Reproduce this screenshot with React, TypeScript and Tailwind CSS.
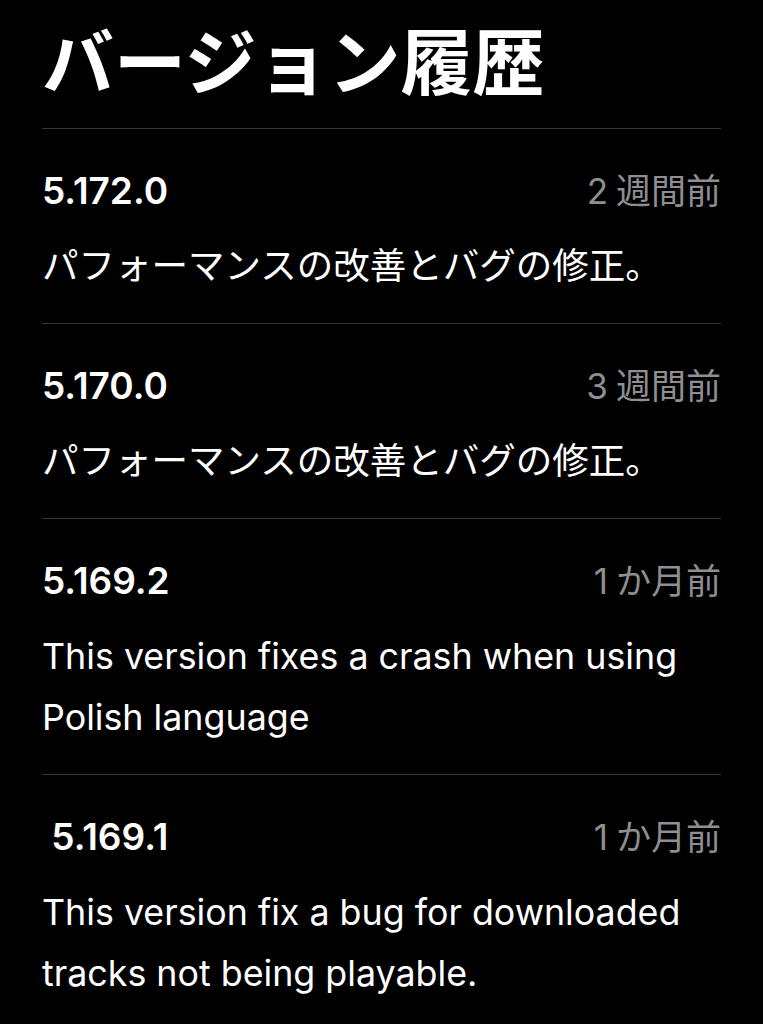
import React from "react";

type Version = {
  version: string;
  count: string;
  unit: string;
  notes: string[];
  jp?: boolean;
};

const versions: Version[] = [
  { version: "5.172.0", count: "2", unit: "週間前", notes: ["パフォーマンスの改善とバグの修正。"], jp: true },
  { version: "5.170.0", count: "3", unit: "週間前", notes: ["パフォーマンスの改善とバグの修正。"], jp: true },
  {
    version: "5.169.2",
    count: "1",
    unit: "か月前",
    notes: ["This version fixes a crash when using", "Polish language"],
  },
  {
    version: "\u00a05.169.1",
    count: "1",
    unit: "か月前",
    notes: ["This version fix a bug for downloaded", "tracks not being playable."],
  },
];

export default function App() {
  return (
    <div
      className="min-h-[1024px] w-full bg-black text-white overflow-hidden"
      style={{ fontFamily: "Inter, 'Noto Sans CJK JP', sans-serif" }}
    >
      <div className="px-[42px]">
        {/* Header */}
        <h1 className="pt-[27px] pb-[29px] text-[72px] leading-[72px] font-bold">
          バージョン履歴
        </h1>

        {/* Version list */}
        <div>
          {versions.map((v) => (
            <div key={v.version} className="border-t border-[#38383a] pt-[40px] pb-[26px]">
              <div className="flex h-[44px] items-center justify-between">
                <span className="text-[37px] font-semibold">{v.version}</span>
                <span className="text-[35px] text-[#8e8e93]">
                  <span className="mr-[8px]">{v.count}</span>
                  {v.unit}
                </span>
              </div>
              <div
                className={
                  v.jp
                    ? "mt-[23px] text-[36.5px] leading-[61px]"
                    : "mt-[23px] text-[35.8px] leading-[61px]"
                }
              >
                {v.notes.map((line) => (
                  <div key={line}>{line}</div>
                ))}
              </div>
            </div>
          ))}
        </div>
      </div>
    </div>
  );
}
